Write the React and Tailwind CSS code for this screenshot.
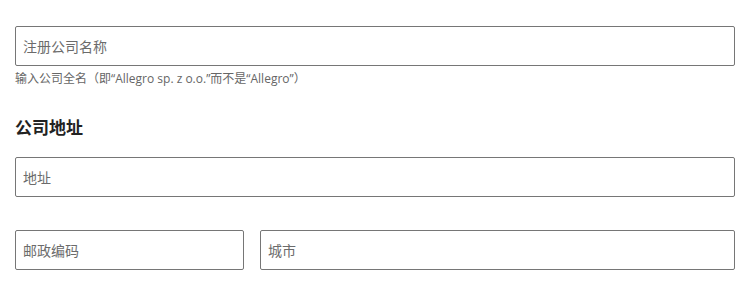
const font = "font-['Open_Sans','Noto_Sans_CJK_SC',sans-serif]";

function Field({ placeholder, className = "" }) {
  return (
    <input
      type="text"
      placeholder={placeholder}
      className={`h-10 w-full rounded-[2px] border border-[#767676] bg-white px-[7px] text-sm text-[#222] outline-none placeholder:text-[#6b6b6b] ${className}`}
    />
  );
}

export default function App() {
  return (
    <div className={`${font} bg-white w-[748px] h-[286px] pl-[15px] pr-[13px] pt-[26px]`}>
      <Field placeholder="注册公司名称" />
      <p className="mt-[4px] text-xs leading-[18px] text-[#666]">
        输入公司全名（即“Allegro sp. z o.o.”而不是“Allegro”）
      </p>

      <h2 className="mt-[28px] text-[17px] font-bold leading-[24px] text-[#222]">公司地址</h2>

      <div className="mt-[17px]">
        <Field placeholder="地址" />
      </div>

      <div className="mt-[33px] flex gap-4">
        <div className="w-[229px] shrink-0">
          <Field placeholder="邮政编码" />
        </div>
        <div className="flex-1">
          <Field placeholder="城市" />
        </div>
      </div>
    </div>
  );
}
